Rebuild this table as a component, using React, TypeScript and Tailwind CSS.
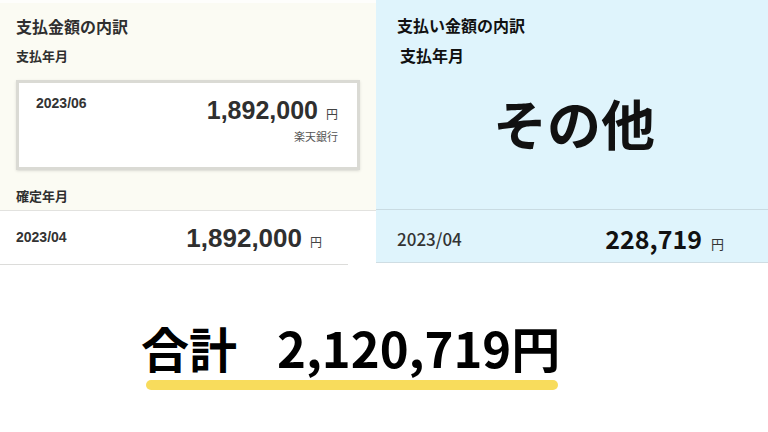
import React from 'react'

const jp = "font-['Noto_Sans_CJK_JP','Noto_Sans',sans-serif]"
const num = "font-['Liberation_Sans','Noto_Sans_CJK_JP',sans-serif]"

export default function App() {
  return (
    <div className={`w-[768px] h-[432px] overflow-hidden bg-white ${jp}`}>
      {/* ─── Breakdown panels ─── */}
      <div className="flex h-[265px]">
        {/* Left: bank payment */}
        <div className="w-[376px] flex flex-col text-[#2f2f2f]">
          <div className="h-[210px] bg-[#fbfbf3] border-t-[3px] border-[#fefefc] px-4 pt-[11px]">
            <h2 className="text-[16px] leading-[24px] font-bold">支払金額の内訳</h2>
            <p className="mt-[8px] text-[13px] leading-[20px] font-bold">支払年月</p>
            <div className="mt-[14px] h-[90px] w-[344px] border-[3px] border-[#dadad4] bg-white shadow-sm pl-[17px] pr-[19px] pt-[12px]">
              <div className="flex items-start justify-between">
                <span className={`${num} text-[14px] leading-[16px] font-bold text-[#333]`}>2023/06</span>
                <span className="mt-[1px] flex items-baseline">
                  <span className={`${num} text-[25px] leading-[28px] font-bold`}>1,892,000</span>
                  <span className="ml-[8px] text-[12px] text-[#444]">円</span>
                </span>
              </div>
              <p className="mt-[5px] text-right text-[11px] leading-[14px] text-[#555]">楽天銀行</p>
            </div>
            <p className="mt-[16px] text-[13px] leading-[20px] font-bold">確定年月</p>
          </div>
          <div className="h-px bg-[#e2e2df]" />
          <div className="h-[53px] bg-white flex items-center justify-between pl-4 pr-[54px]">
            <span className={`${num} text-[14px] font-bold text-[#333]`}>2023/04</span>
            <span className="flex items-baseline">
              <span className={`${num} text-[26px] leading-[28px] font-bold`}>1,892,000</span>
              <span className="ml-[8px] text-[12px] text-[#444]">円</span>
            </span>
          </div>
          <div className="w-[348px] h-px bg-[#dcdcda]" />
        </div>

        {/* Right: other */}
        <div className="flex-1 h-[263px] flex flex-col bg-[#dff4fc] border-b border-[#cfdde3] text-[#111]">
          <div className="h-[210px] border-b border-[#c9dbe2] pl-[21px] pt-[13px]">
            <h2 className="text-[16px] leading-[24px] font-bold">支払い金額の内訳</h2>
            <p className="ml-[3px] mt-[6px] text-[16px] leading-[24px] font-bold">支払年月</p>
            <p className="mt-[29px] -ml-[17px] text-center text-[54px] leading-[54px] font-bold">その他</p>
          </div>
          <div className="flex-1 flex items-center justify-between pl-[21px] pr-[44px] pt-[6px]">
            <span className="text-[17px] font-medium text-[#333]">2023/04</span>
            <span className="flex items-baseline">
              <span className="text-[25px] leading-[28px] font-bold">228,719</span>
              <span className="ml-[9px] text-[13px] text-[#333]">円</span>
            </span>
          </div>
        </div>
      </div>

      {/* ─── Total ─── */}
      <div className="pl-[141px] pt-[57px]">
        <div className="flex items-center text-black font-bold leading-none">
          <span className="text-[48px]">合計</span>
          <span className="ml-[40px] text-[49px]">2,120,719円</span>
        </div>
        <div className="mt-[9px] ml-[5px] w-[412px] h-[10px] rounded-full bg-[#f8dc5c]" />
      </div>
    </div>
  )
}
